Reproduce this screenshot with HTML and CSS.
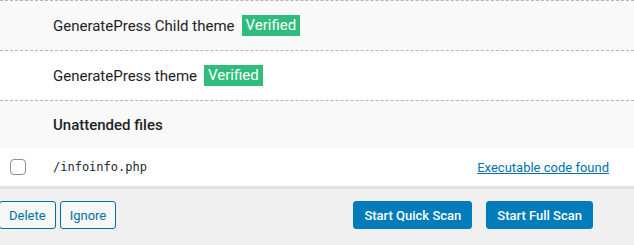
FILE: index.html
```html
<!DOCTYPE html>
<html>
<head>
<meta charset="utf-8">
<link rel="stylesheet" href="styles.css">
</head>
<body>
<div class="panel">
  <div class="row row-alt">
    <span class="label">GeneratePress Child theme</span>
    <span class="badge">Verified</span>
  </div>
  <div class="row">
    <span class="label">GeneratePress theme</span>
    <span class="badge">Verified</span>
  </div>
  <div class="row row-alt row-last">
    <span class="label label-strong">Unattended files</span>
  </div>
  <div class="file-row">
    <span class="check"></span>
    <span class="file">/infoinfo.php</span>
    <a class="issue" href="#">Executable code found</a>
  </div>
</div>
<div class="actions">
  <div class="group">
    <button class="btn btn-secondary btn-delete">Delete</button>
    <button class="btn btn-secondary">Ignore</button>
  </div>
  <div class="group group-right">
    <button class="btn btn-primary">Start Quick Scan</button>
    <button class="btn btn-primary">Start Full Scan</button>
  </div>
</div>
</body>
</html>
```
FILE: styles.css
```css
html, body {
  margin: 0;
  padding: 0;
  background: #f0f0f1;
  font-family: Roboto, "Liberation Sans", sans-serif;
  color: #23282d;
}
.panel {
  background: #fff;
  border-bottom: 3px solid #e2e2e2;
}
.row {
  display: flex;
  align-items: center;
  gap: 7px;
  height: 49px;
  padding-left: 53px;
  border-top: 1px dashed #b4b4b4;
  background: #fff;
}
.row-alt {
  background: #f9f9f9;
}
.row-last {
  height: 47px;
}
.label {
  font-size: 15px;
  font-weight: 400;
  color: #1d2327;
}
.label-strong {
  font-weight: 500;
}
.badge {
  background: #2fbc7d;
  color: #fff;
  font-size: 15px;
  padding: 1px 4px;
  line-height: 19px;
}
.file-row {
  display: flex;
  align-items: center;
  height: 38px;
  padding-left: 10px;
  padding-right: 25px;
}
.check {
  width: 14px;
  height: 14px;
  border: 1px solid #8c8f94;
  border-radius: 4px;
  margin-right: 27px;
}
.file {
  font-family: "DejaVu Sans Mono", monospace;
  font-size: 12px;
  flex: 1;
}
.issue {
  font-size: 13px;
  color: #0073aa;
  text-decoration: underline;
}
.actions {
  display: flex;
  justify-content: space-between;
  padding: 12px 41px 0 0;
}
.group {
  display: flex;
  gap: 4px;
}
.group-right {
  gap: 14px;
}
.btn {
  font-family: Roboto, "Liberation Sans", sans-serif;
  font-size: 13px;
  height: 28px;
  border-radius: 3px;
  padding: 0 9px;
  cursor: pointer;
}
.btn-secondary {
  background: #f6f7f7;
  border: 1px solid #0071a1;
  color: #0071a1;
}
.btn-delete {
  margin-left: -1px;
}
.btn-primary {
  background: #007cba;
  border: 1px solid #007cba;
  color: #fff;
  padding: 0 10px;
  font-weight: 500;
}
```
